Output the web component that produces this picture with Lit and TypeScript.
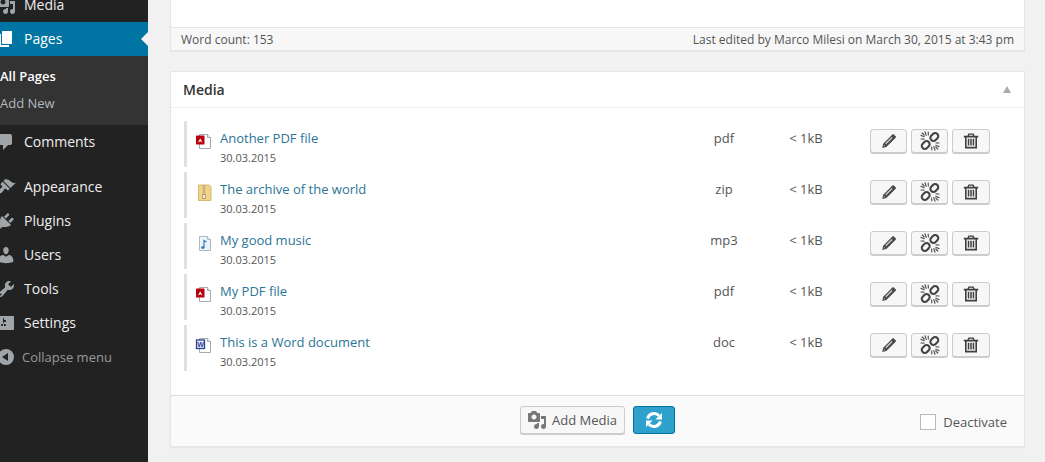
import { LitElement, html, css, svg } from "lit";
import { customElement } from "lit/decorators.js";

const P: Record<string, string> = {
  media: "M13 11V4c0-.55-.45-1-1-1h-1.67L9 1H5L3.67 3H2c-.55 0-1 .45-1 1v7c0 .55.45 1 1 1h10c.55 0 1-.45 1-1zM7 4.5c1.38 0 2.5 1.12 2.5 2.5S8.38 9.5 7 9.5 4.5 8.38 4.5 7 5.62 4.5 7 4.5zM14 6h5v10.5c0 1.38-1.12 2.5-2.5 2.5S14 17.88 14 16.5s1.12-2.5 2.5-2.5c.17 0 .34.02.5.05V9h-3V6zm-4 8.05V13h2v3.5c0 1.38-1.12 2.5-2.5 2.5S7 17.88 7 16.5 8.12 14 9.5 14c.17 0 .34.02.5.05z",
  pages: "M6 15V2h10v13H6zm-1 1h8v2H3V5h2v11z",
  comments: "M5 2h9q.82 0 1.41.59T16 4v7q0 .82-.59 1.41T14 13h-2l-5 5v-5H5q-.82 0-1.41-.59T3 11V4q0-.82.59-1.41T5 2z",
  appearance: "M14.48 11.06L7.41 3.99l1.5-1.5c.5-.56 2.3-.47 3.51.32 1.21.8 1.43 1.28 2.91 2.1 1.18.64 2.45 1.26 4.45.85zm-.71.71L6.7 4.7 4.93 6.47c-.39.39-.39 1.02 0 1.41l1.06 1.06c.39.39.39 1.03 0 1.42-.6.6-1.43 1.11-2.21 1.69-.35.26-.7.53-1.01.84C1.43 13.23.91 14.9 2 16s2.77.57 4.11-.77c.31-.31.58-.66.84-1.01.58-.78 1.09-1.61 1.69-2.21.39-.39 1.02-.39 1.41 0l1.06 1.06c.39.39 1.02.39 1.41 0z",
  plugins: "M13.11 4.36L9.87 7.6 8 5.73l3.24-3.24c.35-.34 1.05-.2 1.56.32.52.51.66 1.21.31 1.55zm-8 1.77l.91-1.12 9.01 9.01-1.19.84c-.71.71-2.63 1.16-3.82 1.16H6.14L4.9 17.26c-.59.59-1.54.59-2.12 0-.59-.58-.59-1.53 0-2.12l1.24-1.24v-3.88c0-1.13.4-3.19 1.09-3.89zm7.26 3.97l3.24-3.24c.34-.35 1.04-.21 1.55.31.52.51.66 1.21.31 1.55l-3.24 3.25z",
  users: "M10 9.25c-2.27 0-2.73-3.44-2.73-3.44C7 4.02 7.82 2 9.97 2c2.16 0 2.98 2.02 2.71 3.81 0 0-.41 3.44-2.68 3.44zm0 2.57L12.72 10c2.39 0 4.52 2.33 4.52 4.53v2.49s-3.65 1.13-7.24 1.13c-3.65 0-7.24-1.13-7.24-1.13v-2.49c0-2.25 1.94-4.48 4.47-4.48z",
  tools: "M16.68 9.77c-1.34 1.34-3.3 1.67-4.95.99l-5.41 6.52c-.99.99-2.59.99-3.58 0s-.99-2.59 0-3.57l6.52-5.42c-.68-1.65-.35-3.61.99-4.95 1.28-1.28 3.12-1.62 4.72-1.06l-2.89 2.89 2.82 2.82 2.86-2.87c.53 1.58.18 3.39-1.08 4.65zM3.81 16.21c.4.39 1.04.39 1.43 0 .4-.4.4-1.04 0-1.43-.39-.4-1.03-.4-1.43 0-.39.39-.39 1.03 0 1.43z",
  settings: "M18 16V4c0-.55-.45-1-1-1H3c-.55 0-1 .45-1 1v12c0 .55.45 1 1 1h14c.55 0 1-.45 1-1zM8 11h1c.55 0 1 .45 1 1s-.45 1-1 1H8v1.5c0 .28-.22.5-.5.5s-.5-.22-.5-.5V13H6c-.55 0-1-.45-1-1s.45-1 1-1h1V5.5c0-.28.22-.5.5-.5s.5.22.5.5V7h1c.55 0 1 .45 1 1s-.45 1-1 1h-1v5.5c0 .28-.22.5-.5.5s-.5-.22-.5-.5V9z",
  collapse: "M10 2a8 8 0 1 0 0 16 8 8 0 0 0 0-16zm2 4v8L6 10z",
};

const dash = (n: string) => svg`<svg class="dash" viewBox="0 0 20 20" width="20" height="20"><path fill="currentColor" fill-rule="evenodd" d=${P[n]}></path></svg>`;

const page = (fill = "#fff", line = "#a3abb0") => svg`<path d="M5.5 1.5h8l3 3v11h-11z" fill=${fill} stroke=${line}></path><path d="M13.5 1.5v3h3" fill="#eef2f4" stroke=${line}></path>`;
const fileIcon = (t: string) => {
  if (t === "pdf") return html`<svg class="file" viewBox="0 0 18 18" width="18" height="18">${page()}<rect x="2" y="2.5" width="8.5" height="9" rx=".6" fill="#b8000f"></rect><path d="M4 9.6l2.2-4.4 2.2 4.4-2.2-1.3z" fill="#fff"></path></svg>`;
  if (t === "zip") return html`<svg class="file" viewBox="0 0 18 18" width="18" height="18"><path d="M4.5 1h11l1.5 2v13.5H4.5z" fill="#f0d48c" stroke="#d6b96f"></path><path d="M10 1.5v9" stroke="#a58f5c" stroke-width="2.4" stroke-dasharray="1 1"></path><path d="M8.6 10.5h2.8v4h-2.8z" fill="#fbf3da" stroke="#93804e" stroke-width=".7"></path></svg>`;
  if (t === "mp3") return html`<svg class="file" viewBox="0 0 18 18" width="18" height="18">${page("#eaf3f7", "#a9bcc6")}<path d="M10 12.5V5.5l2.6 1.6" fill="none" stroke="#3679b8" stroke-width="1.2"></path><ellipse cx="8.8" cy="12.6" rx="1.7" ry="1.3" fill="#3679b8"></ellipse></svg>`;
  return html`<svg class="file" viewBox="0 0 18 18" width="18" height="18">${page()}<rect x="2.5" y="3" width="8" height="8.5" fill="#eef1fa" stroke="#2b3f98" stroke-width="1.3"></rect><text x="6.5" y="10.3" font-size="7" font-weight="700" text-anchor="middle" fill="#2b3f98" font-family="Liberation Sans">W</text></svg>`;
};

const pencil = html`<svg viewBox="0 0 16 16" width="16" height="16"><path fill="#4a4a4a" d="M11.4 1.4a1 1 0 0 1 1.4 0l1.9 1.9a1 1 0 0 1 0 1.4L5.4 14 1.2 15l1-4.2z"></path><path fill="#c9c9c9" d="M10.6 4l.9.9-6.3 6.3-.9-.9zM3 12l1.1 1.1-1.4.4z"></path></svg>`;
const unlink = html`<svg viewBox="0 0 20 20" width="20" height="20"><g fill="none" stroke="#444" stroke-width="2.1"><rect x="10" y="2.9" width="8.6" height="6.2" rx="3.1" transform="rotate(-45 14.3 6)"></rect><rect x="1.4" y="10.9" width="8.6" height="6.2" rx="3.1" transform="rotate(-45 5.7 14)"></rect></g><g stroke="#555" stroke-width="1.2" stroke-linecap="round"><path d="M5 .8l1.2 3.6M8.2 1.2l.2 2.8M1 4.4l3.2 1.3M1 8l3 .2M2.2 2l2 2M15 19.2l-1.2-3.6M11.8 18.8l-.2-2.8M19 15.6l-3.2-1.3M19 12l-3-.2M17.8 18l-2-2"></path></g></svg>`;
const trash = html`<svg viewBox="0 0 16 16" width="16" height="16"><path fill="#3f3f3f" fill-rule="evenodd" d="M5.4 .6h5.2l1 2.2H15.2v1.7H14V15.4H2V4.5H.8V2.8h3.6zm1 1.2L6 2.8h4l-.4-1zM3.6 4.5v9.3h8.8V4.5z"></path><path fill="#3f3f3f" d="M4.8 5.8h1.5v6.8H4.8zM7.25 5.8h1.5v6.8H7.25zM9.7 5.8h1.5v6.8H9.7z"></path></svg>`;
const refresh = html`<svg viewBox="0 0 20 20" width="20" height="20"><g fill="none" stroke="#fff" stroke-width="3"><path d="M3.6 8.6a6.6 6.6 0 0 1 11.4-2.8"></path><path d="M16.4 11.4a6.6 6.6 0 0 1-11.4 2.8"></path></g><path fill="#fff" d="M18 3v6.6h-6.6zM2 17v-6.6h6.6z"></path></svg>`;

const items = [
  ["Another PDF file", "pdf"],
  ["The archive of the world", "zip"],
  ["My good music", "mp3"],
  ["My PDF file", "pdf"],
  ["This is a Word document", "doc"],
];

@customElement("app-root")
export class AppRoot extends LitElement {
  static styles = css`
    :host { display: flex; width: 1045px; height: 462px; overflow: hidden; background: #f1f1f1; font-family: "Open Sans", sans-serif; color: #444; }
    .side { width: 148px; flex: none; background: #222; margin-top: -12px; }
    .mi { height: 34px; display: flex; align-items: center; color: #eee; font-size: 14px; position: relative; }
    .mi span { margin-top: -2px; }
    .dash { flex: none; margin: 0 8px 0 -4px; color: #a0a5aa; }
    .mi.cur { background: #0074a2; color: #fff; }
    .mi.cur .dash { color: #fff; }
    .mi.cur::after { content: ""; position: absolute; right: 0; top: 10px; border: 7px solid transparent; border-left: 0; border-right-color: #f1f1f1; }
    .sub { background: #333; height: 69px; padding-top: 7px; box-sizing: border-box; font-size: 13px; color: #b4b9be; }
    .sub div { height: 27px; line-height: 27px; }
    .sub .on { color: #fff; font-weight: 600; }
    .gap { height: 11px; }
    .mi.col { color: #999; font-size: 13px; }
    .mi.col .dash { margin-right: 6px; }
    .mi.col span { margin-top: 0; }
    .main { flex: 1; padding: 0 20px 0 22px; min-width: 0; }
    .card { background: #fff; border: 1px solid #e5e5e5; box-shadow: 0 1px 1px rgba(0,0,0,.04); }
    .top { border-top: 0; height: 51px; box-sizing: border-box; display: flex; flex-direction: column; justify-content: flex-end; margin-bottom: 20px; }
    .status { box-sizing: border-box; height: 23px; background: #f7f7f7; border-top: 1px solid #e5e5e5; display: flex; justify-content: space-between; align-items: center; padding: 0 10px; font-size: 12px; color: #555; }
    .med { height: 376px; box-sizing: border-box; display: flex; flex-direction: column; }
    .hd { height: 35px; flex: none; border-bottom: 1px solid #eee; display: flex; align-items: center; justify-content: space-between; padding: 0 13px 0 12px; font-size: 14px; font-weight: 600; color: #333; }
    .tri { border: 4.5px solid transparent; border-top: 0; border-bottom: 7px solid #aaa; }
    .list { flex: 1; padding: 13px 34px 0 13px; }
    .row { height: 46px; margin-bottom: 5px; border-left: 3px solid #e0e0e0; display: grid; grid-template-columns: 23px 464px 100px 64px 1fr; align-items: start; }
    .file { margin: 12px 0 0 7px; }
    .info { padding: 0 0 0 10px; }
    .name { font-size: 13px; line-height: 18px; margin-top: 8px; color: #2b7596; }
    .date { font-size: 11px; line-height: 15px; margin-top: 3px; color: #555; }
    .type, .size { font-size: 13px; line-height: 18px; margin-top: 8px; color: #555; text-align: center; }
    .acts { display: flex; gap: 4px; margin: 8px 0 0 32px; }
    .b { box-sizing: border-box; width: 37px; height: 24px; background: #f7f7f7; border: 1px solid #ccc; border-radius: 3px; box-shadow: 0 1px 0 #ccc; display: flex; align-items: center; justify-content: center; }
    .b.w { width: 38px; }
    .foot { height: 51px; flex: none; box-sizing: border-box; border-top: 1px solid #ddd; background: #fafafa; display: grid; grid-template-columns: 349px 155px 1fr; align-items: center; }
    .btns { grid-column: 2; display: flex; gap: 8px; margin-top: -3px; }
    .add { box-sizing: border-box; height: 28px; width: 105px; border: 1px solid #ccc; border-radius: 3px; background: #f7f7f7; box-shadow: 0 1px 0 #ccc; display: flex; align-items: center; justify-content: center; gap: 5px; font-size: 13px; color: #555; flex: none; }
    .add .dash { margin: 0 0 0 -1px; color: #777; }
    .sync { box-sizing: border-box; height: 28px; width: 42px; flex: none; background: #2ea2cc; border: 1px solid #0074a2; border-radius: 3px; display: flex; align-items: center; justify-content: center; }
    .deact { display: flex; align-items: center; justify-content: flex-end; gap: 7px; padding-right: 17px; font-size: 13px; color: #555; margin-top: 1px; }
    .cb { width: 16px; height: 16px; box-sizing: border-box; background: #fff; border: 1px solid #b4b9be; }
  `;

  render() {
    const mi = (icon: string, label: string, cls = "") => html`<div class="mi ${cls}">${dash(icon)}<span>${label}</span></div>`;
    return html`
      <nav class="side">
        ${mi("media", "Media")}
        ${mi("pages", "Pages", "cur")}
        <div class="sub"><div class="on">All Pages</div><div>Add New</div></div>
        ${mi("comments", "Comments")}
        <div class="gap"></div>
        ${mi("appearance", "Appearance")}
        ${mi("plugins", "Plugins")}
        ${mi("users", "Users")}
        ${mi("tools", "Tools")}
        ${mi("settings", "Settings")}
        ${mi("collapse", "Collapse menu", "col")}
      </nav>
      <main class="main">
        <section class="card top">
          <div class="status"><span>Word count: 153</span><span>Last edited by Marco Milesi on March 30, 2015 at 3:43 pm</span></div>
        </section>
        <section class="card med">
          <header class="hd"><span>Media</span><span class="tri"></span></header>
          <div class="list">
            ${items.map(([n, t]) => html`
              <div class="row">
                ${fileIcon(t)}
                <div class="info"><div class="name">${n}</div><div class="date">30.03.2015</div></div>
                <div class="type">${t}</div>
                <div class="size">&lt; 1kB</div>
                <div class="acts"><span class="b">${pencil}</span><span class="b">${unlink}</span><span class="b w">${trash}</span></div>
              </div>`)}
          </div>
          <footer class="foot">
            <div class="btns">
              <div class="add">${dash("media")}<span>Add Media</span></div>
              <div class="sync">${refresh}</div>
            </div>
            <label class="deact"><span class="cb"></span><span>Deactivate</span></label>
          </footer>
        </section>
      </main>
    `;
  }
}
